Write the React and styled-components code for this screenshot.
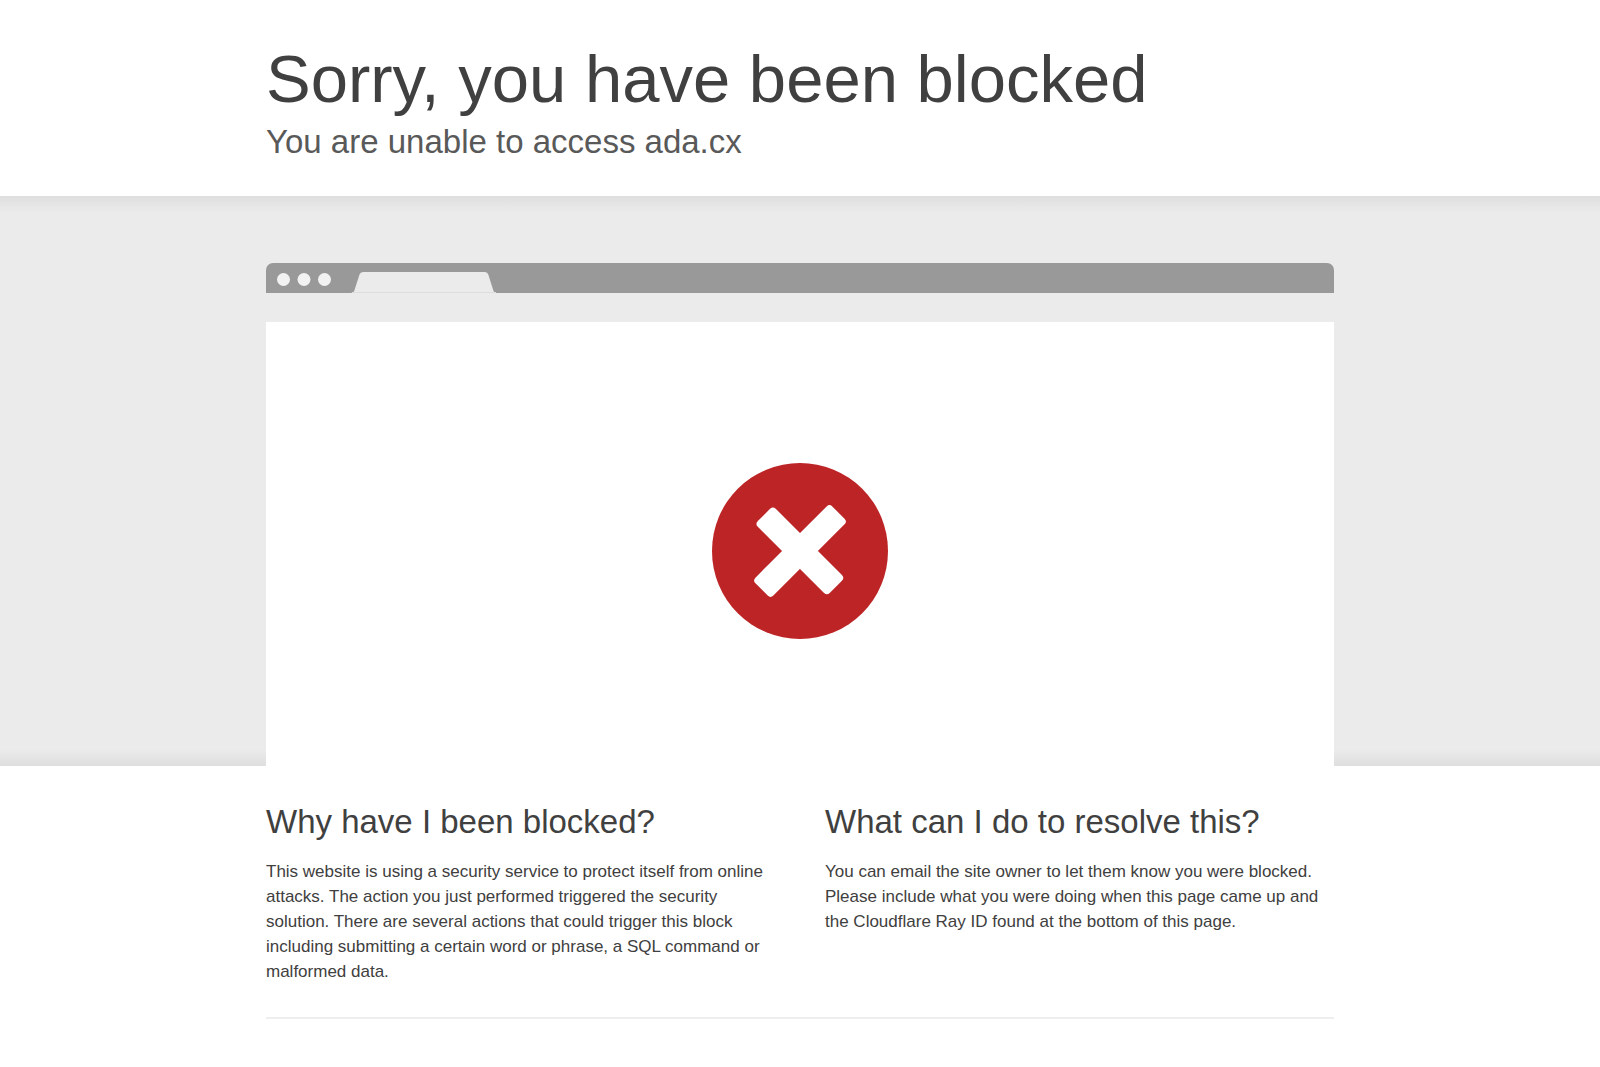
import React from "react";
import styled, { createGlobalStyle } from "styled-components";

const GlobalStyle = createGlobalStyle`
  * {
    box-sizing: border-box;
  }
  body {
    margin: 0;
    background: #fff;
    color: #404040;
    font-family: "Liberation Sans", Arial, sans-serif;
    font-size: 17px;
    line-height: 25px;
  }
`;

const Wrapper = styled.div`
  width: 90%;
  max-width: 1068px;
  margin: 0 auto;
`;

const Header = styled.header`
  padding: 43px 0 32px;
`;

const Title = styled.h1`
  margin: 0;
  font-size: 67px;
  font-weight: 400;
  line-height: 72px;
`;

const Subtitle = styled.h2`
  margin: 5px 0 0;
  color: #595959;
  font-size: 33px;
  font-weight: 400;
  line-height: 44px;
`;

const Highlight = styled.section`
  padding-top: 67px;
  background: linear-gradient(#dedede, #ebebeb 16px, #ebebeb calc(100% - 16px), #dedede);
`;

const TabBar = styled.div`
  height: 30px;
  overflow: hidden;
  border-radius: 7px 7px 0 0;
  background: #999;
  svg {
    display: block;
  }
`;

const Screen = styled.div`
  display: flex;
  justify-content: center;
  margin-top: 29px;
  padding: 141px 0 127px;
  background: #fff;
`;

const Columns = styled(Wrapper)`
  display: grid;
  grid-template-columns: 1fr 1fr;
  gap: 50px;
  padding: 34px 0 33px;
  border-bottom: 2px solid #eee;
`;

const ColumnTitle = styled.h2`
  margin: 0;
  font-size: 33px;
  font-weight: 400;
  line-height: 44px;
`;

const Text = styled.p`
  margin: 15px 0 0;
`;

const TabIcon = () => (
  <svg width="240" height="30" viewBox="0 0 240 30" aria-hidden="true">
    <g fill="#f2f2f2">
      <circle cx="17.5" cy="16.5" r="6.5" />
      <circle cx="38" cy="16.5" r="6.5" />
      <circle cx="58.5" cy="16.5" r="6.5" />
    </g>
    <path
      d="M85 30Q87.500 30 88.200 28L93.500 11.500Q94.300 9 97 9H219Q221.500 9 222.300 11.500L227.500 28Q228.200 30 230.500 30Z"
      fill="#ebebeb"
    />
    <path d="M86 29.500H230" stroke="#ddd" />
  </svg>
);

const BlockedIcon = () => (
  <svg width="176" height="176" viewBox="0 0 528 528" role="img" aria-label="Blocked">
    <circle cx="264" cy="264" r="264" fill="#bd2426" />
    <g fill="#fff">
      <rect x="111" y="226" width="305" height="76" rx="12" transform="rotate(45 264 264)" />
      <rect x="101" y="226" width="326" height="76" rx="12" transform="rotate(-45 264 264)" />
    </g>
  </svg>
);

export default () => (
  <>
    <GlobalStyle />
    <Header>
      <Wrapper>
        <Title>Sorry, you have been blocked</Title>
        <Subtitle>You are unable to access ada.cx</Subtitle>
      </Wrapper>
    </Header>
    <main>
      <Highlight>
        <Wrapper>
          <TabBar>
            <TabIcon />
          </TabBar>
          <Screen>
            <BlockedIcon />
          </Screen>
        </Wrapper>
      </Highlight>
      <Columns>
        <div>
          <ColumnTitle>Why have I been blocked?</ColumnTitle>
          <Text>
            This website is using a security service to protect itself from
            online attacks. The action you just performed triggered the security
            solution. There are several actions that could trigger this block
            including submitting a certain word or phrase, a SQL command or
            malformed data.
          </Text>
        </div>
        <div>
          <ColumnTitle>What can I do to resolve this?</ColumnTitle>
          <Text>
            You can email the site owner to let them know you were blocked.
            Please include what you were doing when this page came up and the
            Cloudflare Ray ID found at the bottom of this page.
          </Text>
        </div>
      </Columns>
    </main>
  </>
);
